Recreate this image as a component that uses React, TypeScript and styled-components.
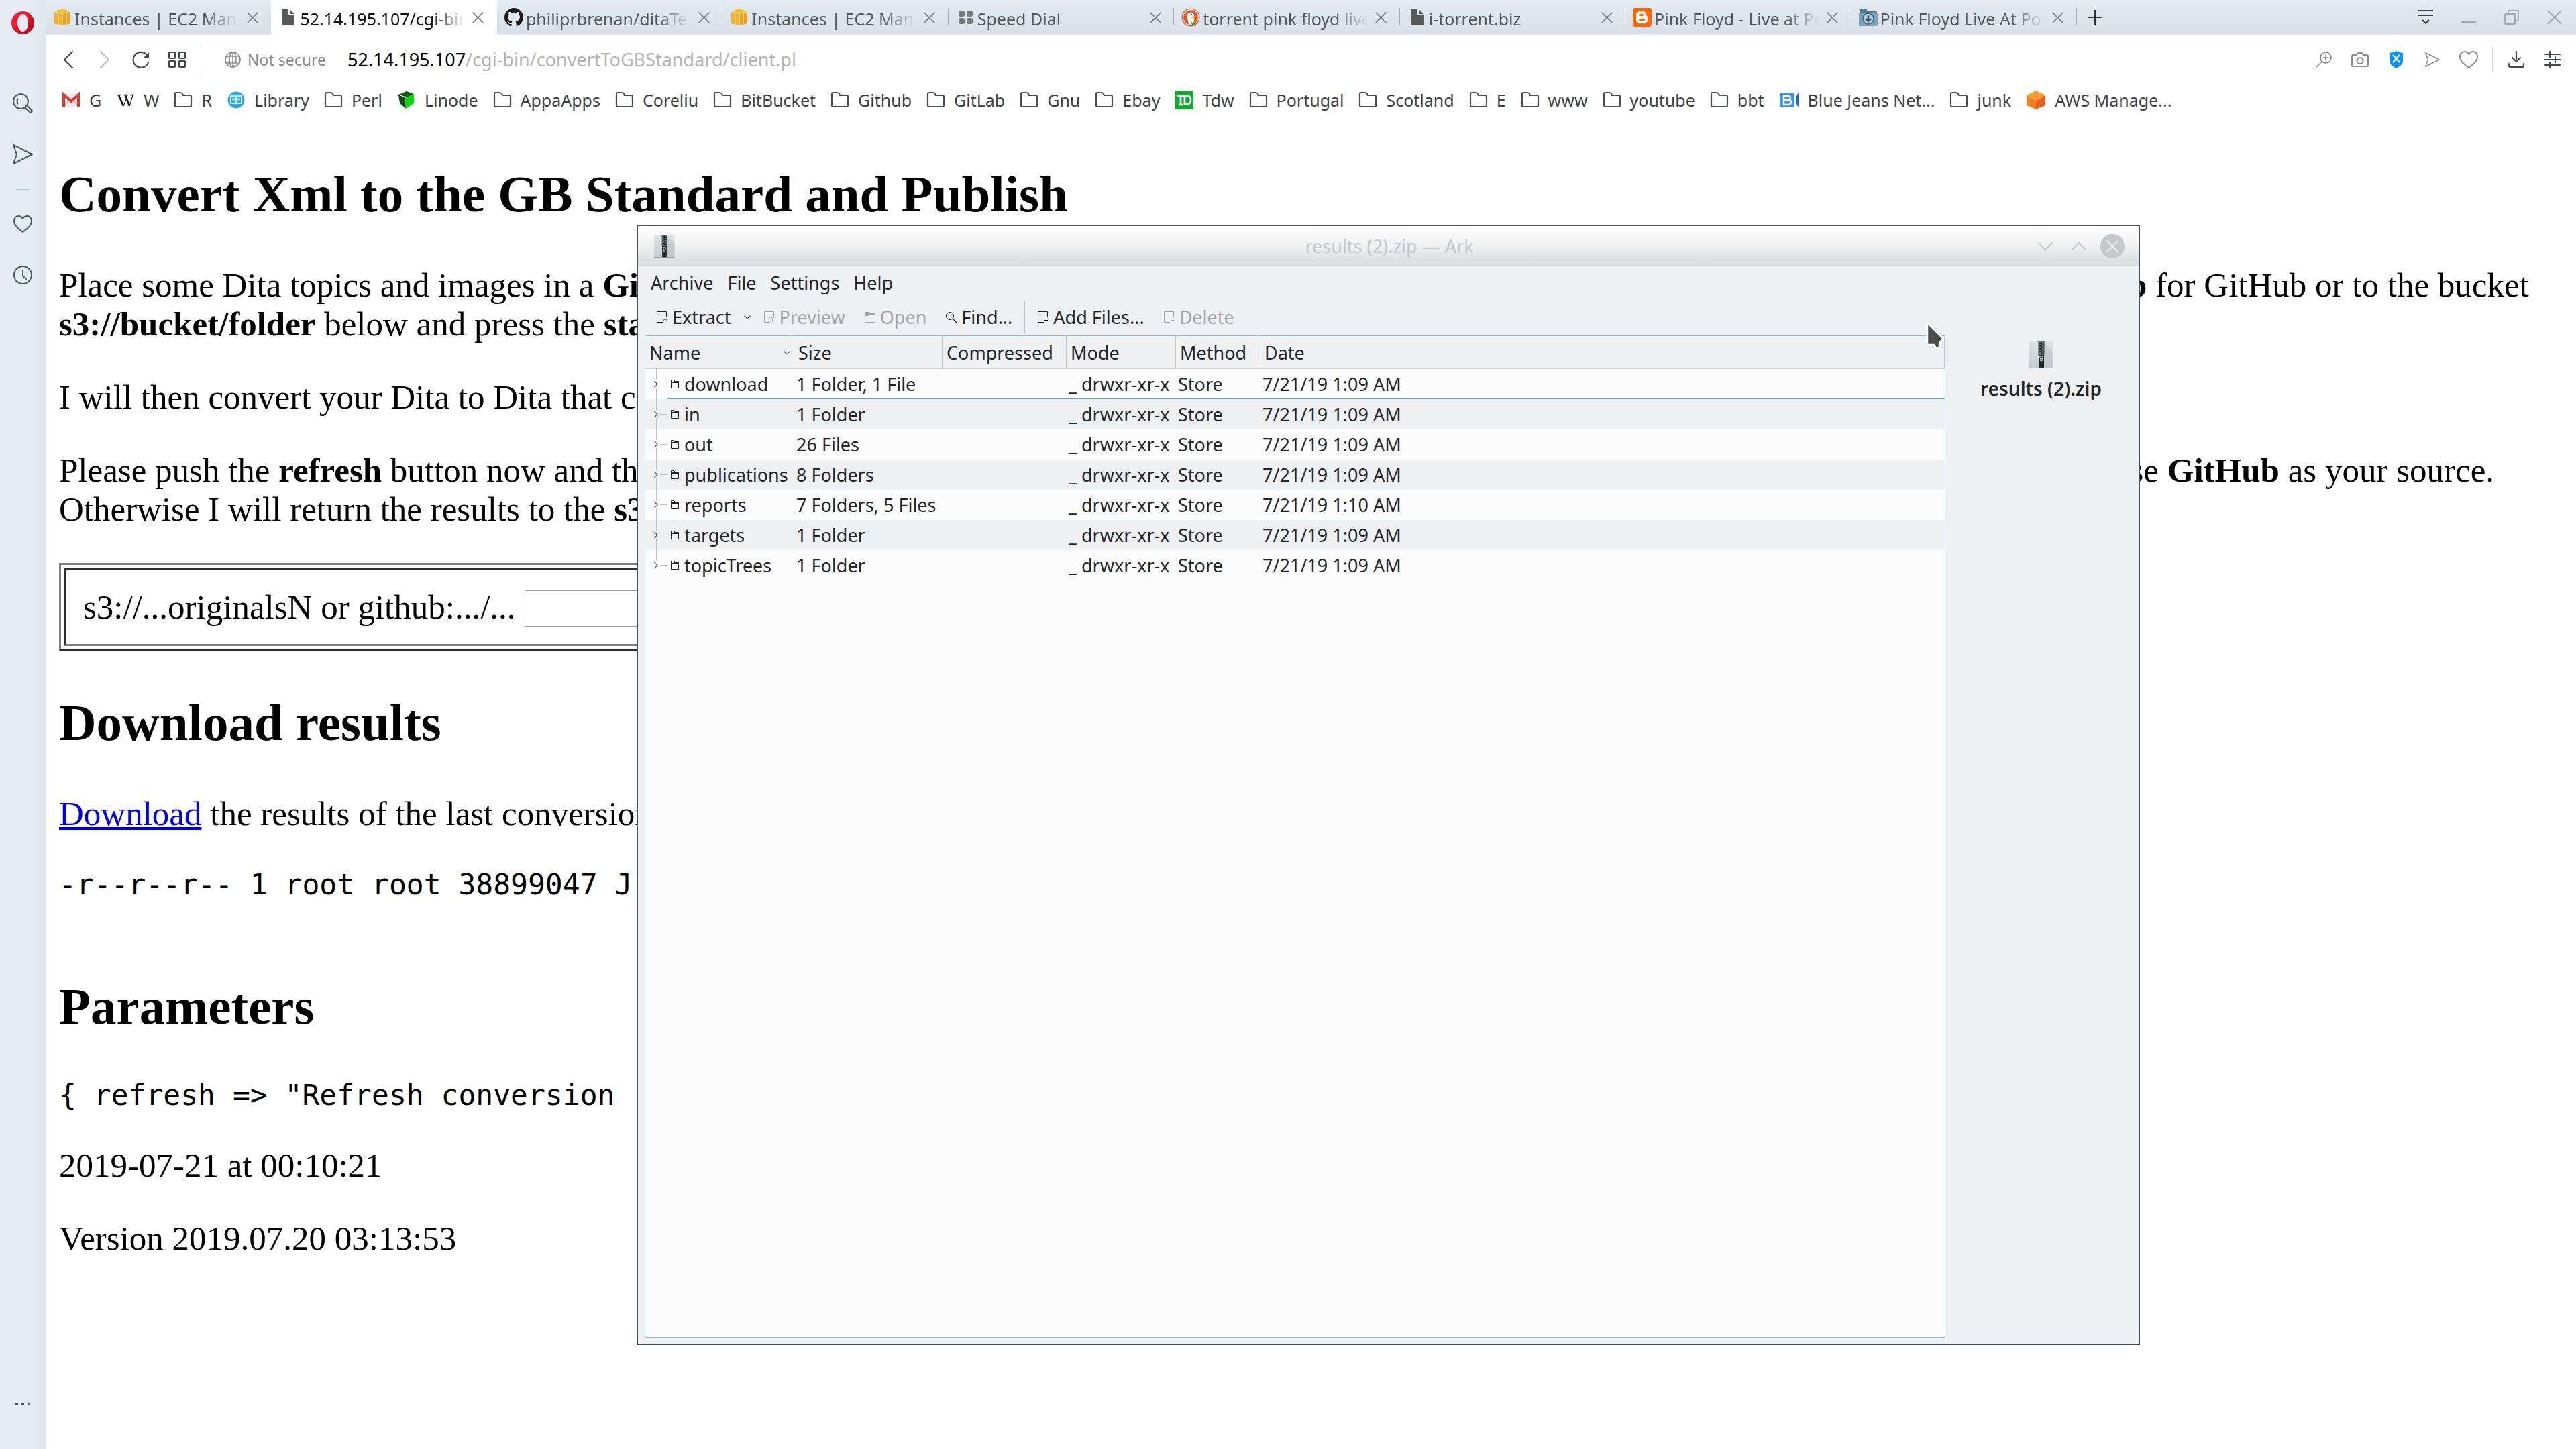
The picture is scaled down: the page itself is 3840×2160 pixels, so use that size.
import React from "react";
import styled, { createGlobalStyle, css } from "styled-components";

const ui = `"Noto Sans", "Open Sans", sans-serif`;
const serif = `"Liberation Serif", "Times New Roman", serif`;
const mono = `"DejaVu Sans Mono", monospace`;

const GlobalStyle = createGlobalStyle`
  *, *::before, *::after { box-sizing: border-box; }
  body { margin: 0; background: #fff; font-family: ${ui}; }
  button { font: inherit; color: inherit; background: none; border: 0; padding: 0; margin: 0; }
  svg { display: block; flex: none; overflow: visible; }
`;

/* ---------- browser shell ---------- */

const Shell = styled.div`
  position: relative;
  display: grid;
  grid-template-columns: 68px minmax(0, 1fr);
  min-height: 100vh;
  overflow: hidden;
`;

const Sidebar = styled.nav`
  display: flex;
  flex-direction: column;
  background: linear-gradient(to right, #e4ecf4 70%, #dee6ee);
  color: #4d5760;
`;

const SideButton = styled.button<{ $height?: number }>`
  display: flex;
  align-items: center;
  justify-content: center;
  height: ${(p) => p.$height ?? 76}px;
`;

const SideSpacer = styled.div<{ $height?: number }>`
  ${(p) => (p.$height ? `height: ${p.$height}px;` : "flex: 1;")}
`;

const SideRule = styled.hr`
  width: 20px;
  height: 2px;
  margin: 13px auto;
  border: 0;
  background: #b4c0ca;
`;

const Browser = styled.div`
  display: flex;
  flex-direction: column;
  min-width: 0;
`;

const TabBar = styled.div`
  display: flex;
  height: 52px;
  background: linear-gradient(#e3ebf3, #d9e0e7 50px, #e3ebf3 51px);
  color: #55585a;
`;

const Tabs = styled.div`
  display: flex;
  flex: 0 1 3028px;
  min-width: 0;
`;

const Tab = styled.div<{ $active?: boolean; $line?: boolean }>`
  display: flex;
  align-items: center;
  flex: 1 1 0;
  min-width: 0;
  padding: 0 18px 0 11px;
  ${(p) => p.$active && css`background: #fff; color: #111;`}
  ${(p) =>
    p.$line &&
    css`
      background: linear-gradient(#a9b1b8, #a9b1b8) right 12px / 1px 26px no-repeat;
    `}
`;

const TabSelect = styled.button`
  display: flex;
  align-items: center;
  gap: 4px;
  flex: 1;
  min-width: 0;
  height: 52px;
  text-align: left;
`;

const TabLabel = styled.span`
  flex: 1;
  min-width: 0;
  overflow: hidden;
  white-space: nowrap;
  font-size: 25px;
  line-height: 34px;
  padding-top: 4px;
  mask-image: linear-gradient(to right, #000 calc(100% - 52px), transparent calc(100% - 2px));
`;

const TabClose = styled.button`
  display: flex;
  align-items: center;
  justify-content: center;
  width: 20px;
  height: 52px;
  margin-left: 8px;
  color: #777b7e;
`;

const NewTab = styled.button`
  display: flex;
  align-items: center;
  justify-content: center;
  width: 54px;
  color: #333;
`;

const WindowButtons = styled.div`
  display: flex;
  margin-left: auto;
`;

const WindowButton = styled.button<{ $dark?: boolean }>`
  display: flex;
  align-items: center;
  justify-content: center;
  width: 64px;
  color: ${(p) => (p.$dark ? "#3c4043" : "#a3a9ae")};
`;

const AddressRow = styled.div`
  display: flex;
  align-items: center;
  height: 74px;
  padding: 0 8px 0 7px;
  color: #4b4d4f;
`;

const ToolIcon = styled.button<{ $muted?: boolean; $faint?: boolean }>`
  display: flex;
  align-items: center;
  justify-content: center;
  width: 54px;
  height: 54px;
  color: ${(p) => (p.$faint ? "#bdbdbd" : p.$muted ? "#8c8c8c" : "#46494b")};
`;

const Divider = styled.span`
  width: 1px;
  height: 38px;
  margin: 0 8px;
  background: #d4d4d4;
`;

const Security = styled.span`
  display: flex;
  align-items: center;
  gap: 10px;
  margin: 0 32px 0 27px;
  color: #8a8a8a;
  font-size: 23px;
  line-height: 34px;
`;

const Url = styled.div`
  flex: 1;
  color: #b4b4b4;
  font-size: 27px;
  line-height: 36px;
  white-space: nowrap;
  outline: none;
`;

const Host = styled.span`
  color: #000;
`;

const Bookmarks = styled.nav`
  display: flex;
  align-items: center;
  gap: 22px;
  height: 46px;
  padding-left: 24px;
  white-space: nowrap;
`;

const Bookmark = styled.a`
  display: flex;
  align-items: center;
  gap: 13px;
  color: #3f4244;
  font-size: 25px;
  line-height: 34px;
  text-decoration: none;
`;

/* ---------- web page ---------- */

const Page = styled.main`
  display: flow-root;
  padding: 10px 20px;
  color: #000;
  font-family: ${serif};
  font-size: 51px;
  line-height: 58px;
`;

const Heading = styled.h2`
  margin: 63px 0;
  font-size: 77px;
  line-height: 88px;
  font-weight: bold;
`;

const Paragraph = styled.p`
  margin: 51px 0;
`;

const PageLink = styled.a`
  color: #0000ee;
`;

const SplitLine = styled.span<{ $start: number }>`
  display: grid;
  grid-template-columns: ${(p) => p.$start}px auto;
  white-space: nowrap;
`;

const Listing = styled.pre`
  margin: 51px 0;
  font-family: ${mono};
  font-size: 43px;
  line-height: 50px;
`;

const FormTable = styled.table`
  border: 3px solid;
  border-color: #808080 #2e2e2e #2e2e2e #808080;
  border-spacing: 4px;
`;

const FormCell = styled.td`
  padding: 26px;
  border: 3px solid;
  border-color: #2e2e2e #808080 #808080 #2e2e2e;
`;

const Field = styled.label`
  display: flex;
  align-items: flex-end;
  gap: 13px;
  height: 59px;
`;

const SourceInput = styled.input`
  width: 600px;
  height: 54px;
  border: 1px solid #a0a0a0;
  background: #fff;
  font-size: 40px;
`;

/* ---------- archive window ---------- */

const ArkWindow = styled.section`
  position: absolute;
  left: 950px;
  top: 336px;
  width: 2240px;
  height: 1669px;
  display: flex;
  flex-direction: column;
  border: 1px solid #475057;
  background: #eff0f1;
  color: #232629;
  font-size: 27px;
  line-height: 36px;
`;

const TitleBar = styled.header`
  display: grid;
  grid-template-columns: 1fr auto 1fr;
  align-items: center;
  height: 60px;
  padding: 0 22px 0 24px;
  background: linear-gradient(#fefefe, #eff0f1 50%, #dedfe1 85%, #dedfe1);
  color: #c3c8cb;
`;

const TitleControls = styled.div`
  display: flex;
  justify-content: flex-end;
  gap: 14px;
`;

const TitleControl = styled.button`
  display: flex;
  align-items: center;
  justify-content: center;
  width: 36px;
  height: 36px;
`;

const MenuBar = styled.nav`
  display: flex;
  gap: 21px;
  padding: 7px 19px 6px;
`;

const ToolBar = styled.div`
  display: flex;
  align-items: center;
  height: 54px;
  padding: 0 13px;
`;

const ToolButton = styled.button`
  display: flex;
  align-items: center;
  gap: 6px;
  padding: 0 14px;
  color: #232629;
  &:disabled { color: #a2a4a6; }
`;

const ToolMenu = styled.button`
  display: flex;
  justify-content: center;
  width: 20px;
`;

const ToolRule = styled.span`
  width: 1px;
  height: 49px;
  margin: 0 4px;
  background: #bdc0c2;
`;

const Body = styled.div`
  display: flex;
  flex: 1;
  min-height: 0;
  padding: 0 0 10px 10px;
`;

const ListFrame = styled.div`
  flex: 1;
  min-width: 0;
  border: 1px solid #8fb9cf;
  border-radius: 3px;
  background: #fcfcfc;
`;

const FileTable = styled.table`
  width: 100%;
  table-layout: fixed;
  border-collapse: separate;
  border-spacing: 0;
`;

const HeadCell = styled.th<{ $width?: number }>`
  ${(p) => p.$width && `width: ${p.$width}px;`}
  height: 49px;
  padding: 1px 5px 0 6px;
  border-right: 1px solid #c5c8ca;
  border-bottom: 1px solid #d5d7d8;
  background: #eff0f1;
  font-weight: normal;
  text-align: left;
`;

const HeadLabel = styled.span`
  display: flex;
  align-items: center;
  justify-content: space-between;
`;

const Row = styled.tr<{ $current?: boolean }>`
  &:nth-child(even) { background: #eff0f1; }
  td { ${(p) => p.$current && "box-shadow: inset 0 -1px #3daee9;"} }
`;

const Cell = styled.td`
  height: 45px;
  padding: 0 0 0 3px;
  white-space: nowrap;
`;

const NameCell = styled.td`
  padding: 0;
`;

const NameInner = styled.div`
  display: flex;
  align-items: center;
  height: 45px;
`;

const Branch = styled.svg`
  background: #fcfcfc;
  tr:nth-child(even) & { background: #eff0f1; }
`;

const NameText = styled.span`
  padding-left: 7px;
`;

const InfoPanel = styled.aside`
  display: flex;
  flex-direction: column;
  align-items: center;
  gap: 12px;
  width: 289px;
  padding: 9px 4px 0 0;
  font-size: 28px;
  font-weight: 600;
`;

const Pointer = styled.svg`
  position: absolute;
  left: 2871px;
  top: 479px;
`;

/* ---------- icons ---------- */

type IconProps = { size?: number };

const stroke = (width: number) => ({
  fill: "none",
  stroke: "currentColor",
  strokeWidth: width,
  strokeLinecap: "round" as const,
  strokeLinejoin: "round" as const,
});

const CloseX = ({ size = 17 }: IconProps) => (
  <svg width={size} height={size} viewBox="0 0 16 16" {...stroke(1.5)}><path d="M1 1l14 14M15 1L1 15" /></svg>
);

const OperaLogo = () => (
  <svg width="34" height="34" viewBox="0 0 34 34">
    <defs>
      <linearGradient id="opera" x1="0" y1="0" x2="1" y2="1"><stop offset=".3" stopColor="#ff1b2d" /><stop offset="1" stopColor="#a70014" /></linearGradient>
    </defs>
    <path fillRule="evenodd" fill="url(#opera)" d="M17 0a17 17 0 1 0 0 34a17 17 0 0 0 0-34zM17 4c5 0 8 6 8 13s-3 13-8 13s-8-6-8-13s3-13 8-13z" />
  </svg>
);

const SideSearch = () => (
  <svg width="30" height="30" viewBox="0 0 30 30" {...stroke(2)}>
    <circle cx="12" cy="12" r="11" /><path d="M7.500 8.500q-2 3.500 0 7" /><path d="M18 21l3-3 7 7a2.100 2.100 0 0 1-3 3z" />
  </svg>
);

const SendIcon = ({ size = 30 }: IconProps) => (
  <svg width={size} height={size} viewBox="0 0 30 30" {...stroke(2)}><path d="M1 1l28 14L1 29l5-14z" /></svg>
);

const HeartIcon = ({ size = 28 }: IconProps) => (
  <svg width={size} height={size} viewBox="0 0 28 28" {...stroke(2)}>
    <path d="M14 26C8 21 1 17 1 9.500C1 5 4 2 8 2c3 0 5 2 6 4c1-2 3-4 6-4c4 0 7 3 7 7.500C27 17 20 21 14 26z" />
  </svg>
);

const ClockIcon = () => (
  <svg width="28" height="28" viewBox="0 0 28 28" {...stroke(2)}><circle cx="14" cy="14" r="13" /><path d="M14 7v8l5 5" /></svg>
);

const DotsIcon = () => (
  <svg width="24" height="6" viewBox="0 0 24 6" fill="currentColor"><circle cx="3" cy="3" r="2.200" /><circle cx="12" cy="3" r="2.200" /><circle cx="21" cy="3" r="2.200" /></svg>
);

const AwsCube = () => (
  <svg width="28" height="28" viewBox="0 0 28 28">
    <path d="M2 6l12 3v17L2 23z" fill="#f6b02c" /><path d="M26 6L14 9v17l12-3z" fill="#eaa31f" /><path d="M3 5l11-4 11 4-11 3z" fill="#fbbf14" />
    <path d="M8 8v16M20 8v16M14 9v17" stroke="#fad98a" strokeWidth="1.500" />
  </svg>
);

const PageIcon = () => (
  <svg width="28" height="28" viewBox="0 0 28 28"><path d="M5 2h10v9h9v15H5z" fill="#58595b" /><path d="M17 2l7 7h-7z" fill="#58595b" /></svg>
);

const GithubMark = () => (
  <svg width="28" height="28" viewBox="0 0 16 16">
    <path fill="#191717" d="M8 0C3.580 0 0 3.580 0 8c0 3.540 2.290 6.530 5.470 7.590.4.070.55-.17.55-.38 0-.19-.01-.82-.01-1.490-2.010.37-2.530-.49-2.690-.94-.09-.23-.48-.94-.82-1.130-.28-.15-.68-.52-.01-.53.63-.01 1.080.58 1.230.82.72 1.210 1.870.87 2.330.66.07-.52.28-.87.51-1.070-1.780-.2-3.640-.89-3.640-3.950 0-.87.31-1.590.82-2.150-.08-.2-.36-1.020.08-2.120 0 0 .67-.21 2.200.82.64-.18 1.320-.27 2-.27s1.360.09 2 .27c1.530-1.040 2.200-.82 2.200-.82.44 1.100.16 1.920.08 2.120.51.56.82 1.270.82 2.150 0 3.070-1.870 3.750-3.650 3.950.29.25.54.73.54 1.480 0 1.070-.01 1.930-.01 2.200 0 .21.15.46.55.38A8 8 0 0 0 16 8c0-4.420-3.580-8-8-8z" />
  </svg>
);

const SpeedDialIcon = () => (
  <svg width="28" height="28" viewBox="0 0 28 28" fill="#77797b">
    <rect x="4" y="4" width="9" height="9" rx="3" /><rect x="16" y="4" width="9" height="9" rx="3" /><rect x="4" y="15" width="9" height="9" rx="3" /><rect x="16" y="15" width="9" height="9" rx="3" />
  </svg>
);

const DuckIcon = () => (
  <svg width="28" height="28" viewBox="0 0 28 28">
    <circle cx="14" cy="14" r="13.500" fill="#de5833" /><circle cx="14" cy="14" r="11.500" fill="none" stroke="#fff" strokeWidth="1.300" />
    <path d="M11 24c-1-6-3-10-2-14c1-4 9-5 10 1c.5 3-.5 4 0 6c.5 3 0 6-1 8c-2 1-5 1-7-1z" fill="#fff" />
    <path d="M15 13c2-1 5-1 6 0c-1 2-4 3-6 2z" fill="#fdb813" /><circle cx="15" cy="10" r="1.200" fill="#2d4f8e" /><path d="M13 20l4 2 3-2v5l-4 0z" fill="#4caf2a" />
  </svg>
);

const BloggerIcon = () => (
  <svg width="28" height="28" viewBox="0 0 28 28">
    <rect width="28" height="28" rx="4" fill="#ff6600" />
    <path fillRule="evenodd" fill="#fff" d="M10 5h5a5 5 0 0 1 5 5c0 2 1 2 2 2.500V18a5 5 0 0 1-5 5h-7a5 5 0 0 1-5-5v-8a5 5 0 0 1 5-5zM10.500 9a1.500 1.500 0 0 0 0 3h4a1.500 1.500 0 0 0 0-3zM10.500 16a1.500 1.500 0 0 0 0 3h6.500a1.500 1.500 0 0 0 0-3z" />
  </svg>
);

const DownloadFolder = () => (
  <svg width="28" height="28" viewBox="0 0 28 28">
    <path d="M2 3q0-2 2-2h7l2 4h12q2 0 2 2v8H2z" fill="#527a94" /><rect x="0" y="8" width="28" height="19" rx="1" fill="#7ba2bb" />
    <circle cx="14" cy="16" r="8" fill="#b5cedc" stroke="#3f6178" strokeWidth="1.500" /><path d="M14 11v9M10 16l4 4 4-4" fill="none" stroke="#2f5066" strokeWidth="2.500" />
  </svg>
);

const FolderIcon = () => (
  <svg width="28" height="28" viewBox="0 0 28 28" fill="none" stroke="#4b4e50" strokeWidth="2.200" strokeLinejoin="round"><path d="M2 22V5q0-2 2-2h6q2 0 3 2l1 2h10q2 0 2 2v13q0 2-2 2H4q-2 0-2-2z" /></svg>
);

const GmailIcon = () => (
  <svg width="28" height="28" viewBox="0 0 28 28">
    <rect x="1" y="4" width="26" height="20" fill="#f5eaea" /><path d="M2 24l9-9 3 2 3-2 9 9" fill="none" stroke="#e3a9a6" strokeWidth="1.500" />
    <path d="M3 24V6l11 10L25 6v18" fill="none" stroke="#de3a34" strokeWidth="4" />
  </svg>
);

const WikiIcon = () => (
  <svg width="28" height="28" viewBox="0 0 28 28" fill="none" stroke="#141414">
    <path d="M4 7l7 16M14 7l6 16" strokeWidth="2.600" /><path d="M11 23l5-12M20 23l5-16" strokeWidth="1.200" /><path d="M1 6.500h7M11 6.500h7M21 6.500h6" strokeWidth="1.300" />
  </svg>
);

const LibraryIcon = () => (
  <svg width="28" height="28" viewBox="0 0 28 28">
    <circle cx="14" cy="14" r="12.500" fill="#29abe2" /><path d="M14 9v11M6 8h6q2 0 2 1.500Q14 8 16 8h6v11h-6q-2 0-2 1.500Q14 19 12 19H6z" fill="none" stroke="#fff" strokeWidth="1.500" /><path d="M9 11v5M11 11v5M17 11v5M19 11v5" stroke="#d5f0fb" />
  </svg>
);

const LinodeIcon = () => (
  <svg width="28" height="28" viewBox="0 0 28 28">
    <path d="M2 6L14 1l11 4-9 5z" fill="#145c14" /><path d="M2 6l10 5 1 16-9-8z" fill="#0c4a10" /><path d="M12 11l13-6v14l-12 8z" fill="#08d808" />
  </svg>
);

const TdIcon = () => (
  <svg width="28" height="28" viewBox="0 0 28 28">
    <rect width="28" height="28" fill="#14ab32" /><path d="M4 8h12M9 8v13M15 8v12h4q5 0 5-6t-5-6h-4M7 21h5" fill="none" stroke="#fff" strokeWidth="2.600" />
  </svg>
);

const BlueJeansIcon = () => (
  <svg width="30" height="28" viewBox="0 0 30 28">
    <rect x="1" y="3" width="22" height="22" fill="#3d91e0" /><path d="M29 3v22q-8-11 0-22z" fill="#0a6fd0" />
    <path d="M7 8h6q4 0 4 3t-4 3H7zM7 14h7q4 0 4 3t-4 4H7z" fill="none" stroke="#fff" strokeWidth="2.500" />
  </svg>
);

const AwsBox = () => (
  <svg width="30" height="28" viewBox="0 0 30 28">
    <path d="M1 7L15 0l14 7-14 8z" fill="#ff9c2e" /><path d="M1 7l14 8v13L1 22z" fill="#f47f20" /><path d="M29 7l-14 8v13l14-6z" fill="#ea5f1e" />
  </svg>
);

const ZipIcon = ({ size = 40 }: IconProps) => (
  <svg width={Math.round(size * 0.9)} height={size} viewBox="0 0 36 40">
    <defs><linearGradient id="zip" x1="0" y1="0" x2="0" y2="1"><stop stopColor="#dfe4e6" /><stop offset="1" stopColor="#c3cacf" /></linearGradient></defs>
    <rect width="36" height="40" fill="url(#zip)" /><path d="M22 2l14 14v23H22z" fill="#b9c1c6" opacity=".5" />
    <rect y="39" width="36" height="1" fill="#90979c" /><rect x="14" width="8" height="20" fill="#6d7478" /><rect x="14" y="20" width="8" height="19" fill="#24282a" />
    <path d="M18 1v2M15 3h4M17 5h4M15 7h4M17 9h4M15 11h4M17 13h4M15 15h4M17 17h4" stroke="#1f2325" strokeWidth="1.500" />
    <path d="M14 0v20M22 0v20" stroke="#33383b" /><path d="M16 22h4v3h-1v4h-2v-4h-1z" fill="none" stroke="#eef0f1" />
  </svg>
);

const FileGlyph = ({ kind }: { kind: "extract" | "preview" | "add" | "delete" }) => (
  <svg width="18" height="18" viewBox="0 0 18 18" fill="none" stroke="currentColor" strokeWidth="1">
    <path d="M10 16.500H1.500V.5h14V9" />
    {kind === "extract" && <path d="M13.500 17v-6M10.500 14l3-3 3 3" />}
    {kind === "preview" && <path d="M13 14.500l3 3M14 12a3 3 0 1 1-6 0a3 3 0 0 1 6 0z" />}
    {kind === "add" && <path d="M13.500 11v5M11 13.500h5" />}
    {kind === "delete" && <path d="M11 13.500h5" />}
  </svg>
);

const OpenGlyph = () => (
  <svg width="18" height="18" viewBox="0 0 18 18" fill="none" stroke="currentColor"><path d="M1.500 1v15.500h15V3.500H8" /><path d="M1 1h6l2 2h8v2H8L6 7H1z" fill="currentColor" stroke="none" /></svg>
);

const FindGlyph = () => (
  <svg width="18" height="18" viewBox="0 0 18 18" fill="none" stroke="currentColor" strokeWidth="1.200"><circle cx="7" cy="7" r="5.500" /><path d="M11 11l6 6" /></svg>
);

const SmallFolder = () => (
  <svg width="18" height="13" viewBox="-2 0 18 13" fill="none" stroke="#232629"><path d="M3.500 12.500v-12h4l2 2h5v10z" /><path d="M4 5V3h3l1-2 2 2h5v2H7z" fill="#232629" stroke="none" /></svg>
);

const MiniChevron = () => (
  <svg width="10" height="6" viewBox="0 0 10 6" fill="none" stroke="#4d5052" strokeWidth="1.200"><path d="M.5.5L5 5 9.500.5" /></svg>
);

/* ---------- data ---------- */

const tabs = [
  { icon: <AwsCube />, title: "Instances | EC2 Man" },
  { icon: <PageIcon />, title: "52.14.195.107/cgi-bin", active: true },
  { icon: <GithubMark />, title: "philiprbrenan/ditaTe" },
  { icon: <AwsCube />, title: "Instances | EC2 Man" },
  { icon: <SpeedDialIcon />, title: "Speed Dial" },
  { icon: <DuckIcon />, title: "torrent pink floyd live" },
  { icon: <PageIcon />, title: "i-torrent.biz" },
  { icon: <BloggerIcon />, title: "Pink Floyd - Live at Po" },
  { icon: <DownloadFolder />, title: "Pink Floyd Live At Po" },
];

const bookmarks: { label: string; icon?: React.ReactNode }[] = [
  { label: "G", icon: <GmailIcon /> },
  { label: "W", icon: <WikiIcon /> },
  { label: "R" },
  { label: "Library", icon: <LibraryIcon /> },
  { label: "Perl" },
  { label: "Linode", icon: <LinodeIcon /> },
  { label: "AppaApps" },
  { label: "Coreliu" },
  { label: "BitBucket" },
  { label: "Github" },
  { label: "GitLab" },
  { label: "Gnu" },
  { label: "Ebay" },
  { label: "Tdw", icon: <TdIcon /> },
  { label: "Portugal" },
  { label: "Scotland" },
  { label: "E" },
  { label: "www" },
  { label: "youtube" },
  { label: "bbt" },
  { label: "Blue Jeans Net...", icon: <BlueJeansIcon /> },
  { label: "junk" },
  { label: "AWS Manage...", icon: <AwsBox /> },
];

const entries = [
  { name: "download", size: "1 Folder, 1 File", date: "7/21/19 1:09 AM" },
  { name: "in", size: "1 Folder", date: "7/21/19 1:09 AM" },
  { name: "out", size: "26 Files", date: "7/21/19 1:09 AM" },
  { name: "publications", size: "8 Folders", date: "7/21/19 1:09 AM" },
  { name: "reports", size: "7 Folders, 5 Files", date: "7/21/19 1:10 AM" },
  { name: "targets", size: "1 Folder", date: "7/21/19 1:09 AM" },
  { name: "topicTrees", size: "1 Folder", date: "7/21/19 1:09 AM" },
];

/* ---------- parts ---------- */

function BrowserTabs() {
  return (
    <TabBar>
      <Tabs>
        {tabs.map((tab, i) => (
          <Tab key={i} $active={tab.active} $line={i > 1}>
            <TabSelect>
              {tab.icon}
              <TabLabel>{tab.title}</TabLabel>
            </TabSelect>
            <TabClose aria-label="Close tab"><CloseX /></TabClose>
          </Tab>
        ))}
      </Tabs>
      <NewTab aria-label="New tab">
        <svg width="22" height="22" viewBox="0 0 22 22" stroke="currentColor" strokeWidth="2.200"><path d="M11 0v22M0 11h22" /></svg>
      </NewTab>
      <WindowButtons>
        <WindowButton $dark aria-label="Tab menu">
          <svg width="22" height="24" viewBox="0 0 22 24" fill="none" stroke="currentColor" strokeWidth="2.200"><path d="M0 2h22M0 9h22M6 16l5 5 5-5" /></svg>
        </WindowButton>
        <WindowButton aria-label="Minimise">
          <svg width="22" height="22" viewBox="0 0 22 22" stroke="currentColor" strokeWidth="2"><path d="M0 18h22" /></svg>
        </WindowButton>
        <WindowButton aria-label="Restore">
          <svg width="22" height="22" viewBox="0 0 22 22" fill="none" stroke="currentColor" strokeWidth="1.800"><rect x="1" y="6" width="15" height="15" rx="1" /><path d="M6 6V1h15v15h-5" /></svg>
        </WindowButton>
        <WindowButton aria-label="Close"><CloseX size={22} /></WindowButton>
      </WindowButtons>
    </TabBar>
  );
}

function AddressBar() {
  return (
    <AddressRow>
      <ToolIcon aria-label="Back"><svg width="14" height="26" viewBox="0 0 14 26" {...stroke(2.2)}><path d="M13 1L1 13l12 12" /></svg></ToolIcon>
      <ToolIcon $faint aria-label="Forward"><svg width="14" height="26" viewBox="0 0 14 26" {...stroke(2.2)}><path d="M1 1l12 12L1 25" /></svg></ToolIcon>
      <ToolIcon aria-label="Reload">
        <svg width="26" height="26" viewBox="0 0 26 26" {...stroke(2.2)}><path d="M24 17A11.500 11.500 0 1 1 22 6" /><path d="M25 2v8h-8z" fill="currentColor" stroke="none" /></svg>
      </ToolIcon>
      <ToolIcon aria-label="Speed dial">
        <svg width="26" height="24" viewBox="0 0 26 24" {...stroke(2.2)}><rect x="1" y="1" width="9" height="9" rx="1" /><rect x="16" y="1" width="9" height="9" rx="1" /><rect x="1" y="14" width="9" height="9" rx="1" /><rect x="16" y="14" width="9" height="9" rx="1" /></svg>
      </ToolIcon>
      <Divider />
      <Security>
        <svg width="24" height="24" viewBox="0 0 24 24" {...stroke(1.5)}><circle cx="12" cy="12" r="11" /><ellipse cx="12" cy="12" rx="5" ry="11" /><path d="M2.500 7h19M2.500 17h19M12 1v22" /></svg>
        Not secure
      </Security>
      <Url role="textbox" aria-label="Address">
        <Host>52.14.195.107</Host>/cgi-bin/convertToGBStandard/client.pl
      </Url>
      <ToolIcon $muted aria-label="Zoom">
        <svg width="24" height="24" viewBox="0 0 24 24" {...stroke(1.6)}><circle cx="15" cy="9" r="8" /><path d="M1 23l8-8M15 5v8M11 9h8" /></svg>
      </ToolIcon>
      <ToolIcon $muted aria-label="Snapshot">
        <svg width="26" height="22" viewBox="0 0 26 22" {...stroke(2)}><path d="M1 6q0-2 2-2h5l2-3h6l2 3h5q2 0 2 2v13q0 2-2 2H3q-2 0-2-2z" /><circle cx="13" cy="12.500" r="4.500" /></svg>
      </ToolIcon>
      <ToolIcon aria-label="Ad blocker">
        <svg width="22" height="26" viewBox="0 0 22 26"><path d="M1 3q5 0 10-3q5 3 10 3v12q0 6-10 11Q1 21 1 15z" fill="#0c94fb" /><path d="M6 6l10 11M16 6L6 17" stroke="#fff" strokeWidth="2.200" /></svg>
      </ToolIcon>
      <ToolIcon $muted aria-label="Send page"><SendIcon size={22} /></ToolIcon>
      <ToolIcon $muted aria-label="Bookmark"><HeartIcon size={28} /></ToolIcon>
      <Divider />
      <ToolIcon aria-label="Downloads">
        <svg width="24" height="26" viewBox="0 0 24 26" {...stroke(2.2)}><path d="M12 1v14M6 10l6 6 6-6M1 19v3q0 2 2 2h18q2 0 2-2v-3" /></svg>
      </ToolIcon>
      <ToolIcon aria-label="Easy setup">
        <svg width="24" height="26" viewBox="0 0 24 26" {...stroke(2.2)}><path d="M1 5h22M1 13h22M1 21h22M8 1v8M16 9v8M8 17v8" /></svg>
      </ToolIcon>
    </AddressRow>
  );
}

function WebPage() {
  return (
    <Page>
      <Heading as="h1">Convert Xml to the GB Standard and Publish</Heading>
      <Paragraph>
        <SplitLine $start={3084}>
          <span>Place some Dita topics and images in a <b>Git</b></span>
          <span><b>b</b> for GitHub or to the bucket</span>
        </SplitLine>
        <b>s3://bucket/folder</b> below and press the <b>start</b>
      </Paragraph>
      <Paragraph>I will then convert your Dita to Dita that co</Paragraph>
      <Paragraph>
        <SplitLine $start={3062}>
          <span>Please push the <b>refresh</b> button now and the</span>
          <span>use <b>GitHub</b> as your source.</span>
        </SplitLine>
        Otherwise I will return the results to the <b>s3</b>
      </Paragraph>
      <FormTable>
        <tbody>
          <tr>
            <FormCell>
              <Field>
                s3://...originalsN or github:.../...
                <SourceInput type="text" />
              </Field>
            </FormCell>
          </tr>
        </tbody>
      </FormTable>
      <Heading>Download results</Heading>
      <Paragraph><PageLink href="#results">Download</PageLink> the results of the last conversion</Paragraph>
      <Listing>{"-r--r--r-- 1 root root 38899047 J\n "}</Listing>
      <Heading>Parameters</Heading>
      <Listing>{'{ refresh => "Refresh conversion'}</Listing>
      <Paragraph>2019-07-21 at 00:10:21</Paragraph>
      <Paragraph>Version 2019.07.20 03:13:53</Paragraph>
    </Page>
  );
}

function FileList() {
  return (
    <FileTable>
      <thead>
        <tr>
          <HeadCell $width={222}><HeadLabel>Name<MiniChevron /></HeadLabel></HeadCell>
          <HeadCell $width={221}>Size</HeadCell>
          <HeadCell $width={185}>Compressed</HeadCell>
          <HeadCell $width={163}>Mode</HeadCell>
          <HeadCell $width={126}>Method</HeadCell>
          <HeadCell>Date</HeadCell>
        </tr>
      </thead>
      <tbody>
        {entries.map((entry, i) => (
          <Row key={entry.name} $current={i === 0}>
            <NameCell>
              <NameInner>
                <Branch width="33" height="45" viewBox="0 0 33 45" fill="none" stroke="#bfc1c3">
                  <path d={i === entries.length - 1 ? "M16.500 0v16M22 22.500h11" : "M16.500 0v16M16.500 28v17M22 22.500h11"} />
                  <path d="M13.500 18l4.500 4.500-4.500 4.500" stroke="#4d5052" strokeWidth="1.200" />
                </Branch>
                <SmallFolder />
                <NameText>{entry.name}</NameText>
              </NameInner>
            </NameCell>
            <Cell>{entry.size}</Cell>
            <Cell />
            <Cell>_ drwxr-xr-x</Cell>
            <Cell>Store</Cell>
            <Cell>{entry.date}</Cell>
          </Row>
        ))}
      </tbody>
    </FileTable>
  );
}

function Ark() {
  return (
    <ArkWindow>
      <TitleBar>
        <ZipIcon size={34} />
        <span>results (2).zip — Ark</span>
        <TitleControls>
          <TitleControl aria-label="Minimise"><svg width="22" height="12" viewBox="0 0 22 12" {...stroke(2)}><path d="M1 1l10 10L21 1" /></svg></TitleControl>
          <TitleControl aria-label="Maximise"><svg width="22" height="12" viewBox="0 0 22 12" {...stroke(2)}><path d="M1 11L11 1l10 10" /></svg></TitleControl>
          <TitleControl aria-label="Close">
            <svg width="36" height="36" viewBox="0 0 36 36"><circle cx="18" cy="18" r="18" fill="#c3c8cb" /><path d="M9.500 9.500l17 17M26.500 9.500l-17 17" stroke="#eceeef" strokeWidth="2" /></svg>
          </TitleControl>
        </TitleControls>
      </TitleBar>
      <MenuBar>
        {["Archive", "File", "Settings", "Help"].map((item) => <button key={item}>{item}</button>)}
      </MenuBar>
      <ToolBar>
        <ToolButton><FileGlyph kind="extract" />Extract</ToolButton>
        <ToolMenu aria-label="Extract options"><MiniChevron /></ToolMenu>
        <ToolButton disabled><FileGlyph kind="preview" />Preview</ToolButton>
        <ToolButton disabled><OpenGlyph />Open</ToolButton>
        <ToolButton><FindGlyph />Find...</ToolButton>
        <ToolRule />
        <ToolButton><FileGlyph kind="add" />Add Files...</ToolButton>
        <ToolButton disabled><FileGlyph kind="delete" />Delete</ToolButton>
      </ToolBar>
      <Body>
        <ListFrame><FileList /></ListFrame>
        <InfoPanel>
          <ZipIcon />
          <span>results (2).zip</span>
        </InfoPanel>
      </Body>
    </ArkWindow>
  );
}

export default function App() {
  return (
    <Shell>
      <GlobalStyle />
      <Sidebar>
        <SideButton $height={68} aria-label="Opera menu"><OperaLogo /></SideButton>
        <SideSpacer $height={48} />
        <SideButton aria-label="Search"><SideSearch /></SideButton>
        <SideButton aria-label="My Flow"><SendIcon /></SideButton>
        <SideRule />
        <SideButton aria-label="Bookmarks"><HeartIcon /></SideButton>
        <SideButton aria-label="History"><ClockIcon /></SideButton>
        <SideSpacer />
        <SideButton $height={134} aria-label="Sidebar setup"><DotsIcon /></SideButton>
      </Sidebar>
      <Browser>
        <BrowserTabs />
        <AddressBar />
        <Bookmarks>
          {bookmarks.map((b) => (
            <Bookmark key={b.label} href="#">{b.icon ?? <FolderIcon />}{b.label}</Bookmark>
          ))}
        </Bookmarks>
        <WebPage />
      </Browser>
      <Ark />
      <Pointer width="28" height="44" viewBox="0 0 28 44">
        <path d="M2 2v33h10l4 6 4-2v-7l6-6z" fill="#4d4d4d" stroke="#fff" strokeWidth="2.500" strokeLinejoin="round" />
      </Pointer>
    </Shell>
  );
}
